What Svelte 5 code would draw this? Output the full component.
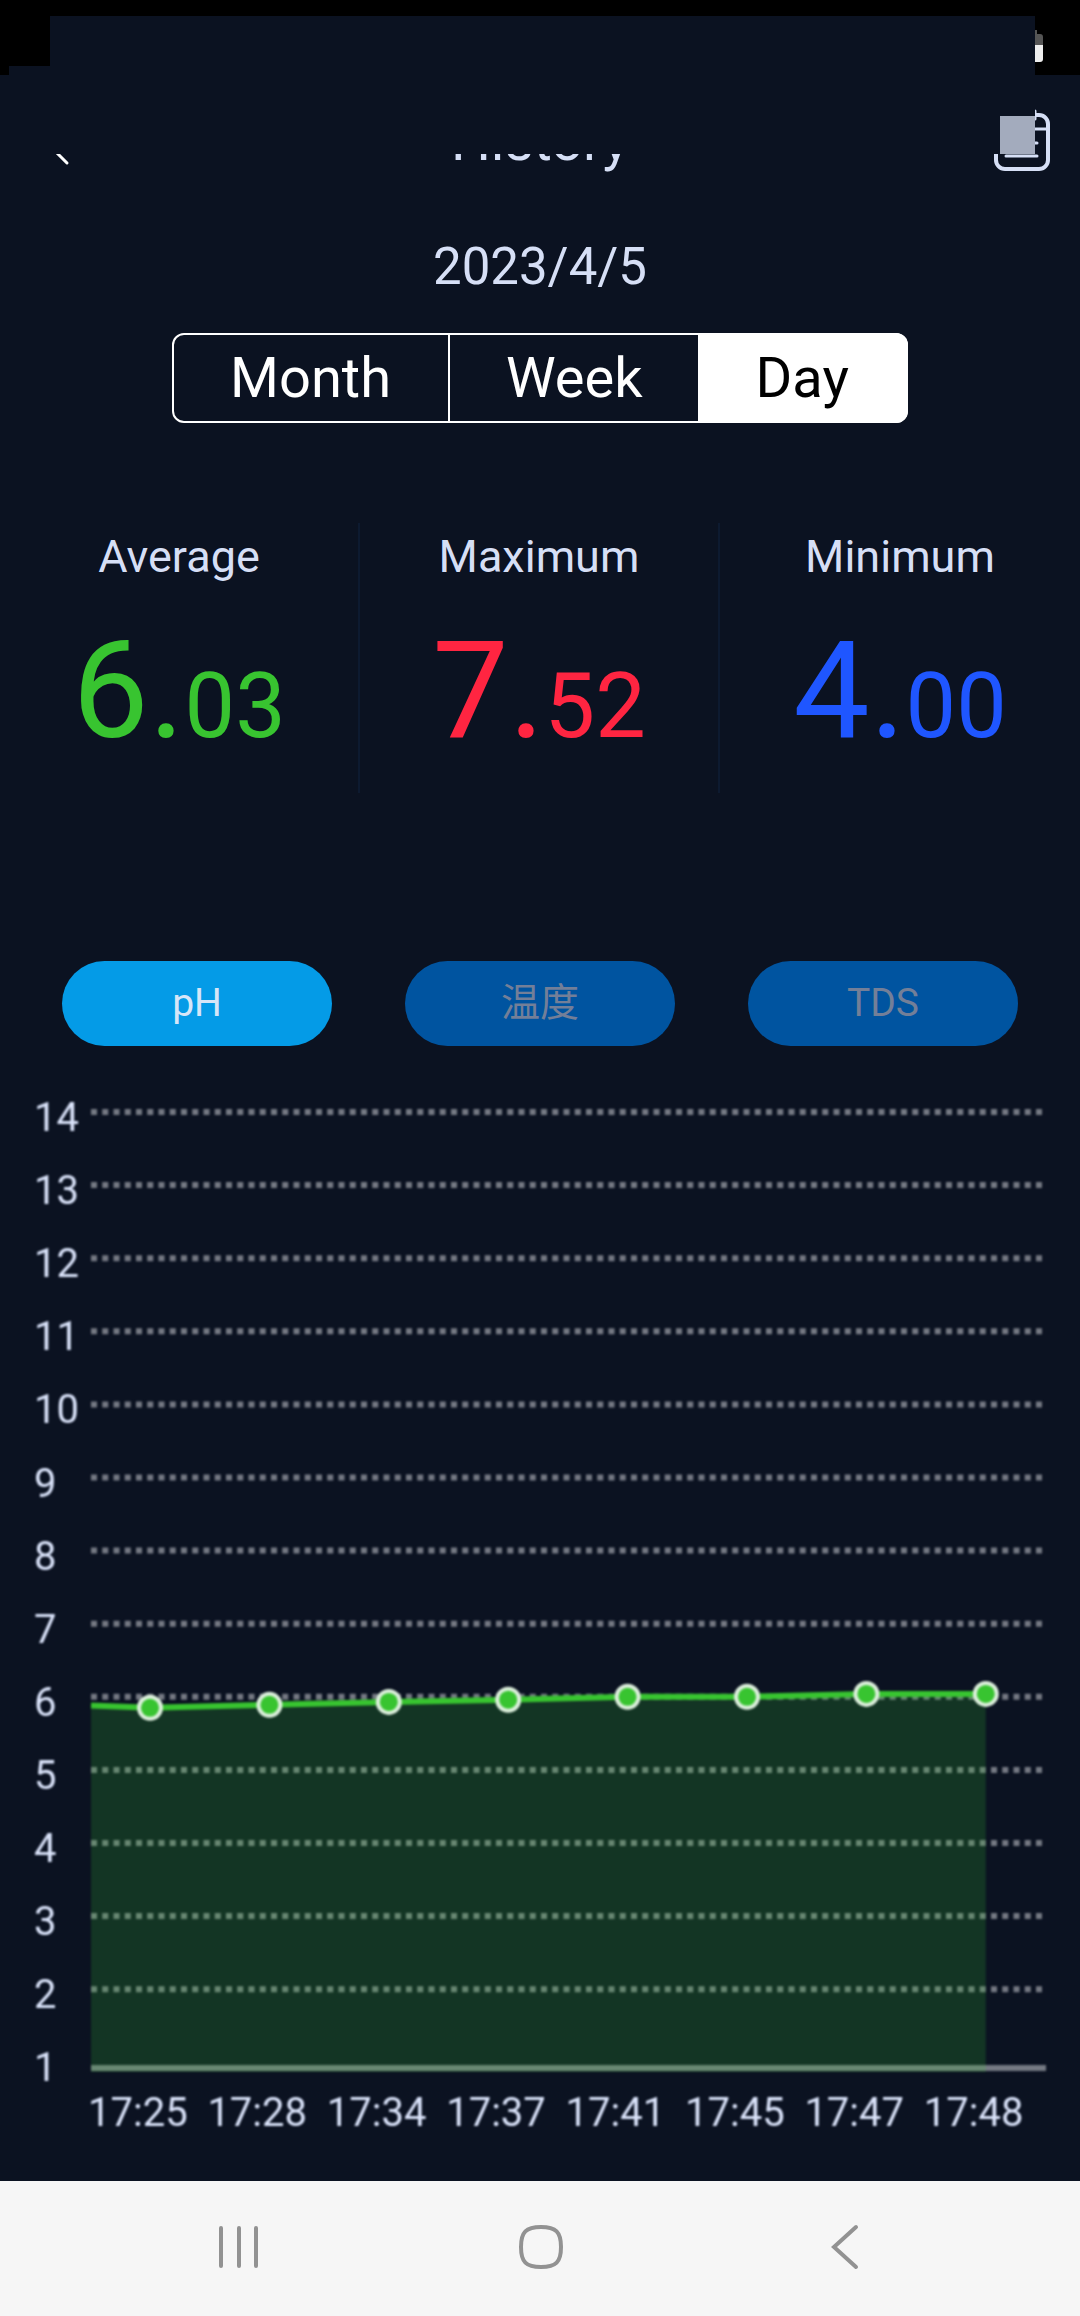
<script>
  const periods = ['Month', 'Week', 'Day'];
  let period = $state('Day');

  const metrics = ['pH', '温度', 'TDS'];
  let metric = $state('pH');

  const stats = [
    { label: 'Average', whole: '6', decimals: '03', tone: 'average' },
    { label: 'Maximum', whole: '7', decimals: '52', tone: 'maximum' },
    { label: 'Minimum', whole: '4', decimals: '00', tone: 'minimum' },
  ];

  const readings = [
    { time: '17:25', value: 5.85 },
    { time: '17:28', value: 5.89 },
    { time: '17:34', value: 5.93 },
    { time: '17:37', value: 5.96 },
    { time: '17:41', value: 6 },
    { time: '17:45', value: 6 },
    { time: '17:47', value: 6.04 },
    { time: '17:48', value: 6.04 },
  ];

  const left = 91;
  const right = 1044;
  const bottom = 982;
  const levels = Array.from({ length: 14 }, (_, i) => 14 - i);

  const yOf = (value) => 26 + (14 - value) * 73.1;
  const points = readings.map((r, i) => ({
    time: r.time,
    x: 150 + i * 119.4,
    y: yOf(r.value),
  }));
  const last = points[points.length - 1];
  const line = `M${left} ${yOf(5.88)} ` + points.map((p) => `L${p.x} ${p.y}`).join(' ');
  const area = `${line} L${last.x} 986 L${left} 986 Z`;
</script>

<div class="screen">
  <div class="status-bar">
    <svg class="battery" viewBox="0 0 18 32" aria-hidden="true">
      <path d="M4 0h8v4h3q3 0 3 3v8H0V4h4z" fill="#555" />
      <path d="M0 15h18v14q0 3-3 3H3q-3 0-3-3z" fill="#eee" />
    </svg>
  </div>

  <header>
    <button class="icon-button" aria-label="Back">
      <svg viewBox="0 0 60 64">
        <path d="M39 10 17 32l22 22" fill="none" stroke="#fff" stroke-width="3" stroke-linecap="round" />
      </svg>
    </button>
    <h1>History</h1>
    <button class="icon-button" aria-label="Records">
      <svg viewBox="0 0 60 64">
        <g fill="none" stroke="#d6dff6" stroke-width="4" stroke-linecap="round">
          <rect x="4" y="6" width="52" height="54" rx="9" />
          <path d="M4 20h52M43 2v8M16 34h29M14 47h31" stroke-width="3" />
        </g>
      </svg>
    </button>
    <div class="cover"></div>
    <div class="cover-edge"></div>
    <div class="swatch"></div>
  </header>

  <main>
    <p class="date">2023/4/5</p>

    <div class="periods">
      {#each periods as name}
        <button class:active={period === name} onclick={() => (period = name)}>{name}</button>
      {/each}
    </div>

    <section class="stats">
      {#each stats as stat}
        <div class="stat {stat.tone}">
          <h2>{stat.label}</h2>
          <p>{stat.whole}.<span>{stat.decimals}</span></p>
        </div>
      {/each}
    </section>

    <div class="metrics">
      {#each metrics as name}
        <button class:active={metric === name} onclick={() => (metric = name)}>{name}</button>
      {/each}
    </div>

    <svg class="chart" viewBox="0 0 1080 1095" role="img" aria-label="pH">
      {#each levels as level}
        {#if level > 1}
          <line class="grid" x1={left} x2={right} y1={yOf(level)} y2={yOf(level)} />
        {/if}
        <text x="34" y={yOf(level) + 19}>{level}</text>
      {/each}
      <line class="axis" x1={left} x2="1046" y1={bottom} y2={bottom} />
      <path class="area" d={area} />
      <path class="line" d={line} />
      {#each points as point}
        <circle cx={point.x} cy={point.y} r="11" />
        <text x={point.x - 62} y="1040">{point.time}</text>
      {/each}
    </svg>
  </main>

  <nav>
    <button aria-label="Recent apps">
      <svg viewBox="0 2 44 48">
        <path d="M5 5v38M23 5v38M40 5v38" />
      </svg>
    </button>
    <button aria-label="Home">
      <svg viewBox="0 2 44 48">
        <path d="M23 4C38 4 43 9 43 24S38 44 23 44 3 39 3 24 8 4 23 4Z" />
      </svg>
    </button>
    <button aria-label="Back">
      <svg viewBox="0 2 44 48">
        <path d="M36 4 14 24l22 20" />
      </svg>
    </button>
  </nav>
</div>

<style>
  :global(body) {
    background: #0b1221;
  }

  .screen {
    display: flex;
    flex-direction: column;
    min-height: 100vh;
    background: #0b1221;
    color: #d6dff6;
    font-family: Roboto, "Noto Sans CJK SC", sans-serif;
  }

  h1,
  h2,
  p {
    margin: 0;
    font-weight: 400;
  }

  button {
    margin: 0;
    padding: 0;
    border: 0;
    background: none;
    color: inherit;
    font: inherit;
    cursor: pointer;
  }

  svg {
    display: block;
  }

  .status-bar {
    display: flex;
    justify-content: flex-end;
    height: 45px;
    padding: 30px 37px 0 0;
    background: #000;
  }

  .battery {
    width: 18px;
    height: 32px;
  }

  header {
    position: relative;
    display: grid;
    grid-template-columns: 60px 1fr 60px;
    align-items: center;
    height: 132px;
    padding: 0 28px;
  }

  h1 {
    font-size: 56px;
    line-height: 60px;
    text-align: center;
  }

  .icon-button svg {
    width: 60px;
    height: 64px;
  }

  .cover,
  .cover-edge,
  .swatch {
    position: absolute;
    bottom: 53px;
    background: #0b1221;
  }

  .cover {
    left: 50px;
    right: 45px;
    height: 138px;
  }

  .cover-edge {
    left: 9px;
    width: 60px;
    height: 88px;
  }

  .swatch {
    right: 45px;
    width: 35px;
    height: 38px;
    background: #a3abbd;
  }

  .date {
    margin-top: 30px;
    font-size: 51px;
    line-height: 60px;
    text-align: center;
  }

  .periods {
    display: flex;
    width: fit-content;
    margin: 36px auto 0;
    border: 2px solid #fff;
    border-radius: 12px;
    color: #fff;
    font-size: 56px;
    line-height: 86px;
  }

  .periods button {
    padding: 0 57px 0 56px;
  }

  .periods button + button {
    border-left: 2px solid #fff;
  }

  .periods button:first-child {
    border-radius: 10px 0 0 10px;
  }

  .periods button:last-child {
    border-left: 0;
    border-radius: 0 10px 10px 0;
  }

  .periods .active {
    background: #fff;
    box-shadow: 0 0 0 2px #fff;
    color: #000;
  }

  .stats {
    display: grid;
    grid-template-columns: repeat(3, 1fr);
    margin-top: 100px;
    text-align: center;
  }

  .stat {
    padding: 8px 0 22px;
    border-right: 2px solid #0d1a30;
  }

  .stat:last-child {
    border-right: 0;
  }

  .stat h2 {
    font-size: 45px;
    line-height: 52px;
  }

  .stat p {
    margin-top: 28px;
    font-size: 136px;
    line-height: 160px;
  }

  .stat span {
    font-size: 90px;
    line-height: 90px;
  }

  .average p {
    color: #38c430;
  }

  .maximum p {
    color: #ff2541;
  }

  .minimum p {
    color: #1f56ff;
  }

  .metrics {
    display: grid;
    grid-template-columns: repeat(3, 1fr);
    gap: 73px;
    margin-top: 168px;
    padding: 0 62px;
  }

  .metrics button {
    height: 85px;
    border-radius: 43px;
    background: #0054a0;
    color: #737f98;
    font-size: 39px;
    line-height: 85px;
  }

  .metrics .active {
    background: #049be7;
    color: #d6e6f8;
  }

  .chart {
    width: 100%;
    margin-top: 40px;
    font-size: 40px;
    filter: blur(1px);
  }

  .chart text {
    fill: #dbe4fb;
  }

  .grid {
    stroke: #757983;
    stroke-width: 6;
    stroke-dasharray: 6 5.25;
  }

  .axis {
    stroke: #757983;
    stroke-width: 6;
  }

  .area {
    fill: #38c430;
    fill-opacity: 0.2;
  }

  .line {
    fill: none;
    stroke: #38c430;
    stroke-width: 6;
  }

  circle {
    fill: #38c430;
    stroke: #dcefdc;
    stroke-width: 4;
  }

  nav {
    display: flex;
    justify-content: center;
    margin-top: auto;
    background: #f6f6f6;
  }

  nav button {
    display: flex;
    justify-content: center;
    align-items: center;
    width: 28%;
    height: 135px;
  }

  nav svg {
    width: 44px;
    height: 48px;
    overflow: visible;
    fill: none;
    stroke: #929292;
    stroke-width: 4;
    stroke-linecap: round;
  }
</style>
